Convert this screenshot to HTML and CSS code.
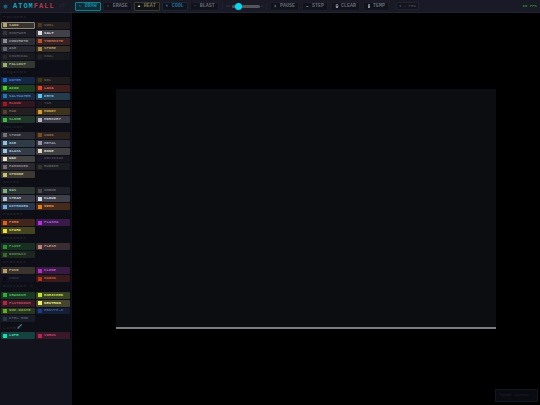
FILE: index.html
```html
<!DOCTYPE html>
<html lang="en">
<head>
    <meta charset="UTF-8">
    <meta name="viewport" content="width=device-width, initial-scale=1.0">
    <title>AtomFall</title>
    <link rel="stylesheet" href="styles.css">
</head>
<body>

    <header>
        <svg class="logo" viewBox="0 0 12 12"><path d="M6 0l1.600 3.200L11 2 9.400 5.500 12 8 8.500 8.600 8 12 6 9.500 3.500 12 3.400 8.600 0 8 2.600 5.500 1 2l3.400 1.200z" fill="#0c6f80"/></svg>
        <h1>ATOM<span>FALL</span></h1>
        <span class="version">v3</span>
        <div class="tools modes">
            <button class="active"><i>✎</i>DRAW</button>
            <button><i>✕</i>ERASE</button>
            <button class="heat"><i>▲</i>HEAT</button>
            <button class="cool"><i>▼</i>COOL</button>
            <button><i>⚡</i>BLAST</button>
        </div>
        <div class="brush">
            <label for="size">SZ</label>
            <input type="range" id="size" min="1" max="20" value="4">
            <span id="sizeValue">4</span>
        </div>
        <div class="tools">
            <button><i>▮</i>PAUSE</button>
            <button><i>▬</i>STEP</button>
            <button><svg viewBox="0 0 12 12"><path d="M1 2h10v2H1zM2 5h8l-1 7H3zM4 0h4v2H4z" fill="#8890a0"/></svg>CLEAR</button>
            <button><svg viewBox="0 0 12 12"><path d="M4 0h4v7a3 3 0 1 1-4 0z" fill="#9aa8b8"/></svg>TEMP</button>
        </div>
        <span class="readout">✚ — PRO</span>
        <span class="fps">60 FPS</span>
    </header>

    <main>
        <aside id="palette"></aside>
        <section class="stage">
            <div class="world"></div>
            <div class="info">hover canvas</div>
        </section>
    </main>

    <script src="script.js"></script>
</body>
</html>
```
FILE: styles.css
```css
* {
    margin: 0;
    padding: 0;
    box-sizing: border-box;
    font-family: "Liberation Mono", "Courier New", monospace;
}
body {
    background: #000;
    color: #646a78;
    min-height: 100vh;
    display: flex;
    flex-direction: column;
    overflow: hidden;
}
header {
    height: 13px;
    background: #191a25;
    border-bottom: 1px solid #222431;
    display: flex;
    align-items: center;
    padding: 0 3px;
    font-size: 5px;
    line-height: 6px;
}
.logo {
    width: 5px;
    height: 5px;
    margin-right: 5px;
}
h1 {
    font-size: 7px;
    line-height: 8px;
    letter-spacing: 1px;
    color: #12a9bd;
}
h1 span {
    color: #ad3c50;
}
.version {
    width: 13px;
    margin: 0 3px 0 4px;
    color: #292c38;
}
.tools {
    display: flex;
    gap: 3px;
}
.modes {
    gap: 2px;
}
button {
    border: 1px solid #1c1d28;
    border-radius: 1px;
    background: #11121a;
    color: #646a78;
    cursor: pointer;
}
.tools button {
    display: flex;
    align-items: center;
    height: 9px;
    padding: 0 3px;
    font-size: 5px;
    font-weight: bold;
    line-height: 6px;
}
.tools i {
    width: 6px;
    font-size: 4px;
    font-style: normal;
    text-align: left;
}
.tools svg {
    width: 4px;
    height: 4px;
    margin-right: 2px;
}
.tools .active {
    background: #0d2d38;
    border-color: #10818f;
    color: #16899a;
}
.tools .heat {
    border-color: #3b3c24;
    color: #777654;
}
.tools .heat i {
    color: #d8d8b0;
}
.tools .cool {
    border-color: #18283c;
    color: #247098;
}
.brush {
    display: flex;
    align-items: center;
    gap: 1px;
    margin: 0 3px;
    padding: 0 3px;
    border-left: 1px solid #20222e;
    border-right: 1px solid #20222e;
    font-size: 4px;
    color: #3c404c;
}
input[type="range"] {
    appearance: none;
    width: 28px;
    height: 3px;
    border-radius: 2px;
    background: #55565a;
}
input[type="range"]::-webkit-slider-thumb {
    appearance: none;
    width: 7px;
    height: 7px;
    border-radius: 50%;
    background: #08d9ee;
}
.readout {
    margin-left: 7px;
    padding: 0 2px;
    border: 1px solid #20222e;
    border-radius: 1px;
    background: #13141d;
    color: #50545f;
    font-size: 4px;
}
.fps {
    margin-left: auto;
    color: #268c2d;
    font-size: 4px;
    font-weight: bold;
}
main {
    flex: 1;
    display: flex;
}
aside {
    width: 72px;
    padding: 0 1px;
    background: #12131c;
}
aside h2 {
    height: 9px;
    padding: 2px 2px 0;
    font-size: 4px;
    line-height: 5px;
    letter-spacing: 1px;
    color: #242630;
    background: #0e0f16;
}
aside h2.symbol {
    height: 10px;
}
aside h2 svg {
    width: 5px;
    height: 5px;
}
.swatches {
    display: grid;
    grid-template-columns: 1fr 1fr;
    grid-auto-rows: 1fr;
    gap: 1px;
    padding-right: 1px;
    background: #0e0f16;
}
.rows-1 { height: 7px; }
.rows-2 { height: 15px; }
.rows-3 { height: 23px; }
.rows-4 { height: 30px; }
.rows-6 { height: 46px; }
.swatches button {
    display: flex;
    align-items: center;
    gap: 2px;
    min-width: 0;
    padding: 0 1px;
    border: 0;
    font-size: 4px;
    font-weight: bold;
    line-height: 5px;
    background: color-mix(in srgb, var(--tint) 22%, #14151e);
    color: color-mix(in srgb, var(--tint) 75%, #c8c8d0);
}
.swatches button::before {
    content: "";
    width: 4px;
    height: 4px;
    margin-left: 1px;
    background: var(--tint);
}
.swatches .selected {
    outline: 1px solid #8c8774;
    outline-offset: -1px;
}
.stage {
    flex: 1;
    position: relative;
    display: flex;
    align-items: center;
    justify-content: center;
}
.world {
    width: 81%;
    aspect-ratio: 19 / 12;
    background: #0b0d11;
    border-bottom: 2px solid #7c7c7e;
}
.info {
    position: absolute;
    right: 2px;
    bottom: 3px;
    width: 43px;
    padding: 3px 4px;
    border: 1px solid #151720;
    border-radius: 1px;
    background: #0a0b11;
    color: #232631;
    font-size: 4px;
    line-height: 5px;
}
```
FILE: script.js
```js
const groups = [
    ["POWDERS", [["SAND", "#b5a26c"], ["SOIL", "#4e351e"], ["GUNPWDR", "#343439"], ["SALT", "#dddde2"], ["CONCRETE", "#8c8c8c"], ["THERMITE", "#b9522a"], ["ASH", "#65656c"], ["SPORE", "#a88542"], ["CHARCOAL", "#28282b"], ["COAL", "#232420"], ["FALLOUT", "#9baf70"]]],
    ["LIQUIDS", [["WATER", "#1f65c4"], ["OIL", "#443718"], ["ACID", "#45cf29"], ["LAVA", "#dc471c"], ["SALTWATER", "#2a73b4"], ["CRYO", "#5bc5ef"], ["BLOOD", "#a11722"], ["TAR", "#191719"], ["MUD", "#59412b"], ["HONEY", "#d79c28"], ["SLIME", "#45b650"], ["MERCURY", "#b8b8c3"]]],
    ["SOLIDS", [["STONE", "#737378"], ["WOOD", "#7b4a21"], ["ICE", "#91c3df"], ["METAL", "#9494a8"], ["GLASS", "#9fc7df"], ["BONE", "#ddd5bd"], ["WAX", "#eee6cc"], ["OBSIDIAN", "#1e1629"], ["HARDENED", "#776c6d"], ["RUBBER", "#34342d"], ["SPONGE", "#c8bf77"]]],
    ["GASES", [["GAS", "#83b183"], ["SMOKE", "#48484c"], ["STEAM", "#bac5d1"], ["CLOUD", "#d1d6e2"], ["NITROGEN", "#72b0db"], ["NEON", "#ed7916"]]],
    ["ENERGY", [["FIRE", "#e36019"], ["PLASMA", "#b632df"], ["SPARK", "#eee52f"]]],
    ["ORGANIC", [["PLANT", "#278f2c"], ["FLESH", "#bd8374"], ["BIOMASS", "#396927"]]],
    ["SPECIAL", [["FUSE", "#baa064"], ["CLONE", "#b82fc0"], ["VOID", "#08071c"], ["MAGMA", "#bd3212"]]],
    ["NUCLEAR ☢", [["URANIUM", "#2eae39"], ["ENRICHED", "#bde52e"], ["PLUTONIUM", "#b52640"], ["NEUTRON", "#f0ef65"], ["NUC.WASTE", "#64a923"], ["HEAVYH₂O", "#173e86"], ["CTRL.ROD", "#263447"]]],
    ["LIFE", [["LIFE", "#19deb0"], ["VIRUS", "#bb2350"]]]
];

const dna = '<svg viewBox="0 0 12 12"><path d="M1 11c5 0 2-4 5-5s1-5 5-5M1 8c4-3 4 2 5-2s5 0 5-5M3 8l2 2M7 3l2 2" stroke="#5b8798" stroke-width="2" fill="none"/></svg>';
const palette = document.getElementById("palette");

groups.forEach(([title, items]) => {
    const heading = document.createElement("h2");
    heading.textContent = title;
    if (title === "LIFE") heading.innerHTML += dna;
    if (title === "LIFE" || title.startsWith("NUCLEAR")) heading.className = "symbol";
    palette.append(heading);

    const grid = document.createElement("div");
    grid.className = "swatches rows-" + Math.ceil(items.length / 2);
    items.forEach(([name, color]) => {
        const button = document.createElement("button");
        button.textContent = name;
        button.style.setProperty("--tint", color);
        if (name === "SAND") button.className = "selected";
        button.onclick = () => {
            document.querySelector(".selected").classList.remove("selected");
            button.classList.add("selected");
        };
        grid.append(button);
    });
    palette.append(grid);
});
```
